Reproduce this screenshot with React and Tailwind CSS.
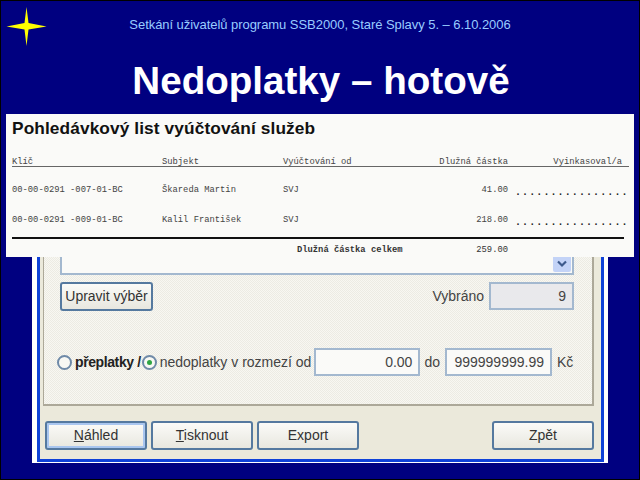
const Row = ({ klic, subjekt, castka }) => (
  <div className="flex h-[30px] items-center text-[8.8px] text-[#444]">
    <span className="w-[150px] shrink-0">{klic}</span>
    <span className="w-[121px] shrink-0">{subjekt}</span>
    <span className="w-[110px] shrink-0">SVJ</span>
    <span className="w-[115px] shrink-0 text-right">{castka}</span>
    <span className="ml-[7px] mt-[2px] text-[10px] font-bold tracking-[1.1px] text-[#222]">................</span>
  </div>
);

const Btn = ({ children, className = '', first }) => (
  <button className={`flex h-[29px] items-center justify-center rounded-[3px] border-2 border-[#55799f] bg-gradient-to-b from-[#fbfbf8] to-[#e8e7df] text-[14px] text-[#333] ${first ? 'shadow-[inset_0_0_0_2px_#a9c6ef]' : ''} ${className}`}>
    {children}
  </button>
);

const Field = ({ children, className = '' }) => (
  <div className={`flex h-[28px] items-center justify-end border-2 border-[#a3b8cf] px-[6px] text-[14px] text-[#444] ${className}`}>
    {children}
  </div>
);

const Radio = ({ checked }) => (
  <span className="flex h-[15px] w-[15px] shrink-0 items-center justify-center rounded-full border-2 border-[#6f8aa8] bg-[#f8f8f4]">
    {checked && <span className="h-[5px] w-[5px] rounded-full bg-[#2fa544]" />}
  </span>
);

export default function App() {
  return (
    <div className="h-[480px] w-[640px] overflow-hidden border border-black bg-[#000080] font-['Liberation_Sans',sans-serif]">
      <div className="relative flex h-[113px] flex-col items-center">
        <svg className="absolute left-[5px] top-[6px]" width="41" height="40" viewBox="0 0 41 40">
          <path d="M20.5 0 L22.5 16 L40.5 19.5 L22.5 22.5 L20.5 39 L18.5 22.5 L0.5 19.5 L18.5 16 Z" fill="#ffff00" />
        </svg>
        <div className="mt-[15px] text-[13px] leading-[18px] tracking-[-0.05px] text-[#99ccff]">
          Setkání uživatelů programu SSB2000, Staré Splavy 5. – 6.10.2006
        </div>
        <div className="ml-[2px] mt-[26px] text-[38.6px] font-bold leading-[42px] text-white">Nedoplatky – hotově</div>
      </div>

      <div className="relative h-[365px]">
        <div className="absolute left-[5px] top-0 z-10 h-[143px] w-[628px] bg-[#fafaf8] pl-[6px] pr-[5px] font-['Liberation_Mono',monospace]">
          <div className="pt-[2px] font-['Liberation_Sans',sans-serif] text-[17.3px] font-bold leading-[24px] tracking-[0.1px] text-[#111]">
            Pohledávkový list vyúčtování služeb
          </div>
          <div className="mt-[14px] flex h-[13px] items-end border-b border-[#666] text-[8.8px] leading-[8px] text-[#444]">
            <span className="w-[150px] shrink-0">Klíč</span>
            <span className="w-[121px] shrink-0">Subjekt</span>
            <span className="w-[110px] shrink-0">Vyúčtování od</span>
            <span className="w-[115px] shrink-0 text-right">Dlužná částka</span>
            <span className="w-[114px] shrink-0 text-right">Vyinkasoval/a</span>
          </div>
          <div className="mt-[9px]">
            <Row klic="00-00-0291 -007-01-BC" subjekt="Škareda Martin" castka="41.00" />
            <Row klic="00-00-0291 -009-01-BC" subjekt="Kalil František" castka="218.00" />
          </div>
          <div className="mr-[5px] mt-[1px] flex h-[24px] items-center border-t-2 border-[#111] pt-[1px] text-[8.8px] text-[#333]">
            <span className="w-[285px] shrink-0" />
            <span className="w-[106px] shrink-0 font-bold">Dlužná částka celkem</span>
            <span className="w-[105px] shrink-0 text-right">259.00</span>
          </div>
        </div>

        <div className="ml-[31px] w-[576px] border-b border-l-[5px] border-r-4 border-white">
          <div className="border-x-[3px] border-b-[3px] border-[#0f42d8] bg-[#ebe9db]">
            <div className="ml-[3px] mr-[7px] flex h-[292px] flex-col border-b-2 border-l border-r-2 border-[#aca899] bg-[repeating-conic-gradient(#f8f7f2_0%_25%,#ecebe3_0%_50%)] bg-[length:2px_2px] pl-[16px] pr-[18px]">
              <div className="relative h-[161px] shrink-0 border-x-2 border-b-2 border-[#a3b8cf] bg-[#fafaf8]">
                <span className="absolute bottom-[1px] right-[1px] flex h-[17px] w-[18px] items-center justify-center rounded-[2px] bg-[#c3d3f7]">
                  <svg width="10" height="8" viewBox="0 0 10 8"><path d="M1 1.5 L5 5.5 L9 1.5" fill="none" stroke="#3d5a8c" strokeWidth="2.2" /></svg>
                </span>
              </div>
              <div className="mt-[7px] flex items-start justify-between">
                <Btn className="w-[93px]">Upravit výběr</Btn>
                <div className="flex items-center gap-[5px]">
                  <span className="text-[14px] text-[#444]">Vybráno</span>
                  <Field className="w-[85px] bg-[#e9e9ec]">9</Field>
                </div>
              </div>
              <div className="-ml-[3px] mt-[37px] flex items-center text-[14px] text-[#444]">
                <Radio />
                <span className="ml-[3px] font-bold tracking-[-0.4px] text-[#222]">přeplatky /</span>
                <span className="ml-[1px]"><Radio checked /></span>
                <span className="ml-[3px]">nedoplatky v rozmezí od</span>
                <Field className="ml-[3px] w-[106px] bg-[#fafaf8]">0.00</Field>
                <span className="ml-[4px]">do</span>
                <Field className="ml-[5px] w-[107px] bg-[#fafaf8]">999999999.99</Field>
                <span className="ml-[5px]">Kč</span>
              </div>
            </div>
            <div className="flex h-[53px] items-start pl-[5px] pt-[15px]">
              <div className="flex gap-[4px]">
                <Btn first className="w-[102px]"><span><u>N</u>áhled</span></Btn>
                <Btn className="w-[102px]"><span><u>T</u>isknout</span></Btn>
                <Btn className="w-[102px]">Export</Btn>
              </div>
              <Btn className="ml-[133px] w-[102px]">Zpět</Btn>
            </div>
          </div>
        </div>
      </div>
    </div>
  );
}
